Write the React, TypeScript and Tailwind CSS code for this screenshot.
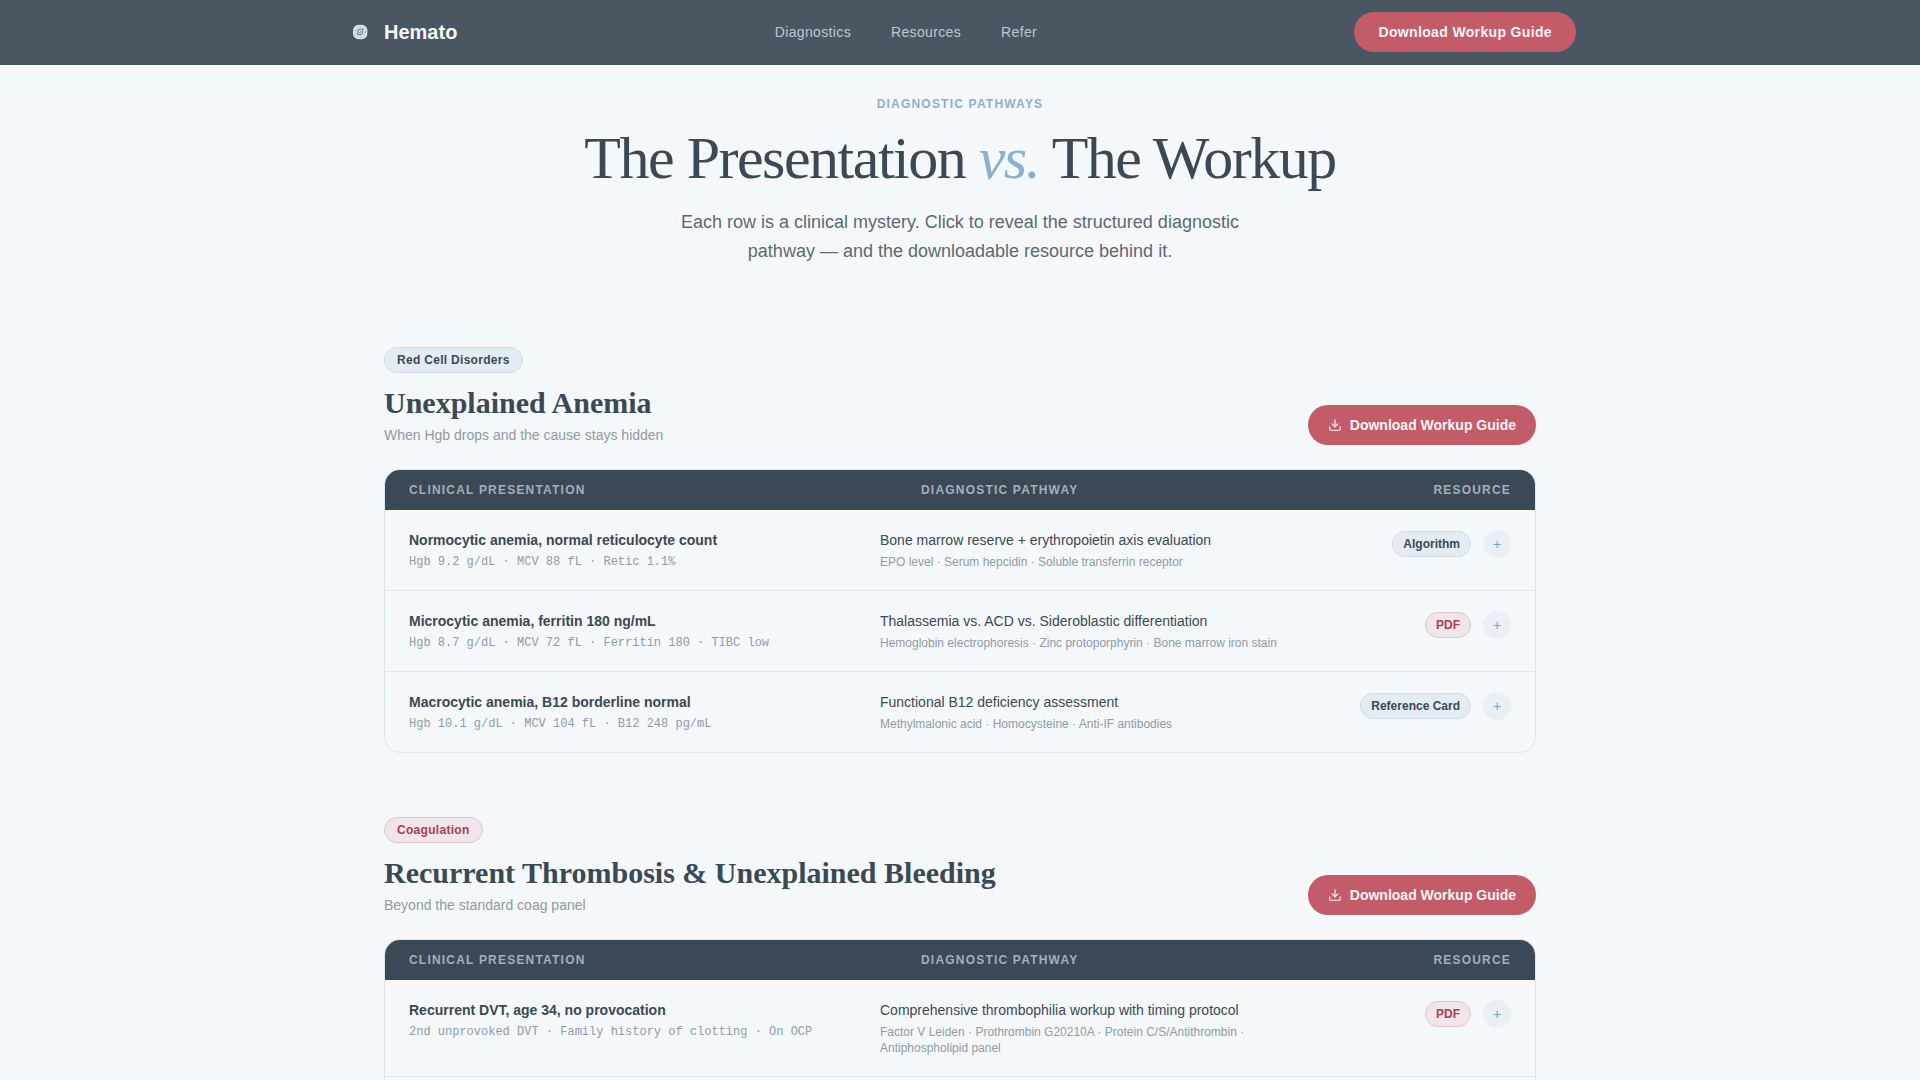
import { Download } from "lucide-react";
import { clsx } from "clsx";
import type { FC } from "react";

type Tone = "slate" | "rose";

interface Pathway {
	presentation: string;
	findings: string;
	pathway: string;
	tests: string;
	resource: string;
	tone: Tone;
}

interface Category {
	id: string;
	label: string;
	tone: Tone;
	title: string;
	subtitle: string;
	rows: Pathway[];
	open?: boolean;
}

const categories: Category[] = [
	{
		id: "anemia",
		label: "Red Cell Disorders",
		tone: "slate",
		title: "Unexplained Anemia",
		subtitle: "When Hgb drops and the cause stays hidden",
		rows: [
			{
				presentation: "Normocytic anemia, normal reticulocyte count",
				findings: "Hgb 9.2 g/dL · MCV 88 fL · Retic 1.1%",
				pathway: "Bone marrow reserve + erythropoietin axis evaluation",
				tests: "EPO level · Serum hepcidin · Soluble transferrin receptor",
				resource: "Algorithm",
				tone: "slate",
			},
			{
				presentation: "Microcytic anemia, ferritin 180 ng/mL",
				findings: "Hgb 8.7 g/dL · MCV 72 fL · Ferritin 180 · TIBC low",
				pathway: "Thalassemia vs. ACD vs. Sideroblastic differentiation",
				tests: "Hemoglobin electrophoresis · Zinc protoporphyrin · Bone marrow iron stain",
				resource: "PDF",
				tone: "rose",
			},
			{
				presentation: "Macrocytic anemia, B12 borderline normal",
				findings: "Hgb 10.1 g/dL · MCV 104 fL · B12 248 pg/mL",
				pathway: "Functional B12 deficiency assessment",
				tests: "Methylmalonic acid · Homocysteine · Anti-IF antibodies",
				resource: "Reference Card",
				tone: "slate",
			},
		],
	},
	{
		id: "coagulation",
		label: "Coagulation",
		tone: "rose",
		title: "Recurrent Thrombosis & Unexplained Bleeding",
		subtitle: "Beyond the standard coag panel",
		open: true,
		rows: [
			{
				presentation: "Recurrent DVT, age 34, no provocation",
				findings: "2nd unprovoked DVT · Family history of clotting · On OCP",
				pathway: "Comprehensive thrombophilia workup with timing protocol",
				tests: "Factor V Leiden · Prothrombin G20210A · Protein C/S/Antithrombin · Antiphospholipid panel",
				resource: "PDF",
				tone: "rose",
			},
		],
	},
];

const toneClasses: Record<Tone, string> = {
	slate: "border-[#cfdbe6] bg-[#e4ecf3] text-[#3b4855]",
	rose: "border-[#e6c3cb] bg-[#f0e5ea] text-[#a8404f]",
};

const Logo: FC = () => (
	<svg viewBox="0 0 32 32" className="size-8" aria-hidden="true">
		<rect x="9" y="8.8" width="14.4" height="14.4" rx="5.6" fill="#d3e4ee" />
		<g fill="none" stroke="#71818e" strokeLinecap="round">
			<circle cx="16.2" cy="16" r="5.2" strokeWidth="0.7" strokeDasharray="1.2 2.2" stroke="#8fa3b1" />
			<path d="M13.8 18.4v-3.8l1.8-1.4h3v3.6l-1.8 1.8z" strokeWidth="1.1" />
			<path d="M15.8 16.6l1-1" strokeWidth="1.2" />
		</g>
	</svg>
);

const Navbar: FC = () => (
	<header className="border-b border-[#465360] bg-[#4a5661]">
		<div className="mx-auto flex h-16 max-w-7xl items-center justify-between px-6">
			<a href="#top" className="flex items-center gap-2 text-xl font-bold text-[#f4f8fb]">
				<Logo />
				Hemato
			</a>
			<nav className="flex gap-10 text-sm tracking-wide text-[#bcc8d3]">
				<a href="#diagnostics">Diagnostics</a>
				<a href="#resources">Resources</a>
				<a href="#refer">Refer</a>
			</nav>
			<button
				type="button"
				className="h-10 rounded-full bg-[#c45b69] px-6 text-sm font-bold tracking-wide text-[#f8f4f6]"
			>
				Download Workup Guide
			</button>
		</div>
	</header>
);

const PathwayTable: FC<{ rows: Pathway[]; open?: boolean }> = ({ rows, open }) => (
	<div
		className={clsx(
			"mt-6 overflow-hidden border-[#dde5ec]",
			open ? "rounded-t-2xl border-x border-t pb-20" : "rounded-2xl border",
		)}
	>
		<table className="w-full table-fixed border-separate border-spacing-0 text-left">
			<thead className="bg-[#3b4855] text-xs tracking-widest text-[#a3afba]">
				<tr>
					<th className="h-10 w-[495px] pl-6 font-bold">CLINICAL PRESENTATION</th>
					<th className="w-[37%] pl-[41px] font-bold">DIAGNOSTIC PATHWAY</th>
					<th className="pr-6 text-right font-bold">RESOURCE</th>
				</tr>
			</thead>
			<tbody
				className={clsx(
					"[&>tr>td]:border-[#e0e7ed]",
					open ? "[&>tr>td]:border-b" : "[&>tr:not(:last-child)>td]:border-b",
				)}
			>
				{rows.map((row) => (
					<tr key={row.presentation} className="align-top">
						<td className="py-5 pl-6">
							<p className="text-sm font-bold text-[#3b4855]">{row.presentation}</p>
							<p className="mt-1 font-['Liberation_Mono',monospace] text-xs text-[#8e9ba8]">{row.findings}</p>
						</td>
						<td className="py-5 pr-6">
							<p className="text-sm text-[#3b4855]">{row.pathway}</p>
							<p className="mt-1 text-xs text-[#8e9ba8]">{row.tests}</p>
						</td>
						<td className="py-5 pr-6">
							<div className="flex items-center justify-end gap-3">
								<span
									className={clsx(
										"rounded-full border px-2.5 py-1 text-xs font-bold whitespace-nowrap",
										toneClasses[row.tone],
									)}
								>
									{row.resource}
								</span>
								<button
									type="button"
									aria-label={`Expand ${row.presentation}`}
									className="size-7 rounded-full bg-[#e9eff5] text-sm text-[#6fa5c8]"
								>
									+
								</button>
							</div>
						</td>
					</tr>
				))}
			</tbody>
		</table>
	</div>
);

const CategorySection: FC<{ category: Category }> = ({ category }) => (
	<section id={category.id}>
		<div className="flex items-end justify-between">
			<div>
				<span
					className={clsx(
						"inline-block rounded-full border px-3 py-1 align-top text-xs font-bold tracking-wide",
						toneClasses[category.tone],
					)}
				>
					{category.label}
				</span>
				<h2 className="mt-3 font-['Liberation_Serif',serif] text-3xl font-bold text-[#3b4855]">
					{category.title}
				</h2>
				<p className="mt-1 text-sm text-[#8e9ba8]">{category.subtitle}</p>
			</div>
			<button
				type="button"
				className="flex h-10 items-center gap-2 rounded-full bg-[#c45b69] px-5 text-sm font-bold text-[#f8f4f6]"
			>
				<Download size={14} />
				Download Workup Guide
			</button>
		</div>
		<PathwayTable rows={category.rows} open={category.open} />
	</section>
);

export default function App() {
	return (
		<div
			id="top"
			className="h-screen overflow-y-auto bg-[#f4f8fb] font-['Liberation_Sans',Arial,sans-serif] [scrollbar-width:none]"
		>
			<Navbar />
			<main className="mx-auto max-w-6xl">
				<div className="pt-[31px] text-center">
					<p className="text-xs font-bold tracking-widest text-[#8ab0d0]">DIAGNOSTIC PATHWAYS</p>
					<h1 className="mt-4 font-['Liberation_Serif',serif] text-6xl tracking-tight text-[#3b4855]">
						The Presentation <em className="text-[#8ab0d0]">vs.</em> The Workup
					</h1>
					<p className="mx-auto mt-5 max-w-xl text-lg leading-[29px] text-[#5c6875]">
						Each row is a clinical mystery. Click to reveal the structured diagnostic pathway — and the
						downloadable resource behind it.
					</p>
				</div>
				<div id="diagnostics" className="mt-[81px] flex flex-col gap-16">
					{categories.map((category) => (
						<CategorySection key={category.id} category={category} />
					))}
				</div>
			</main>
		</div>
	);
}
